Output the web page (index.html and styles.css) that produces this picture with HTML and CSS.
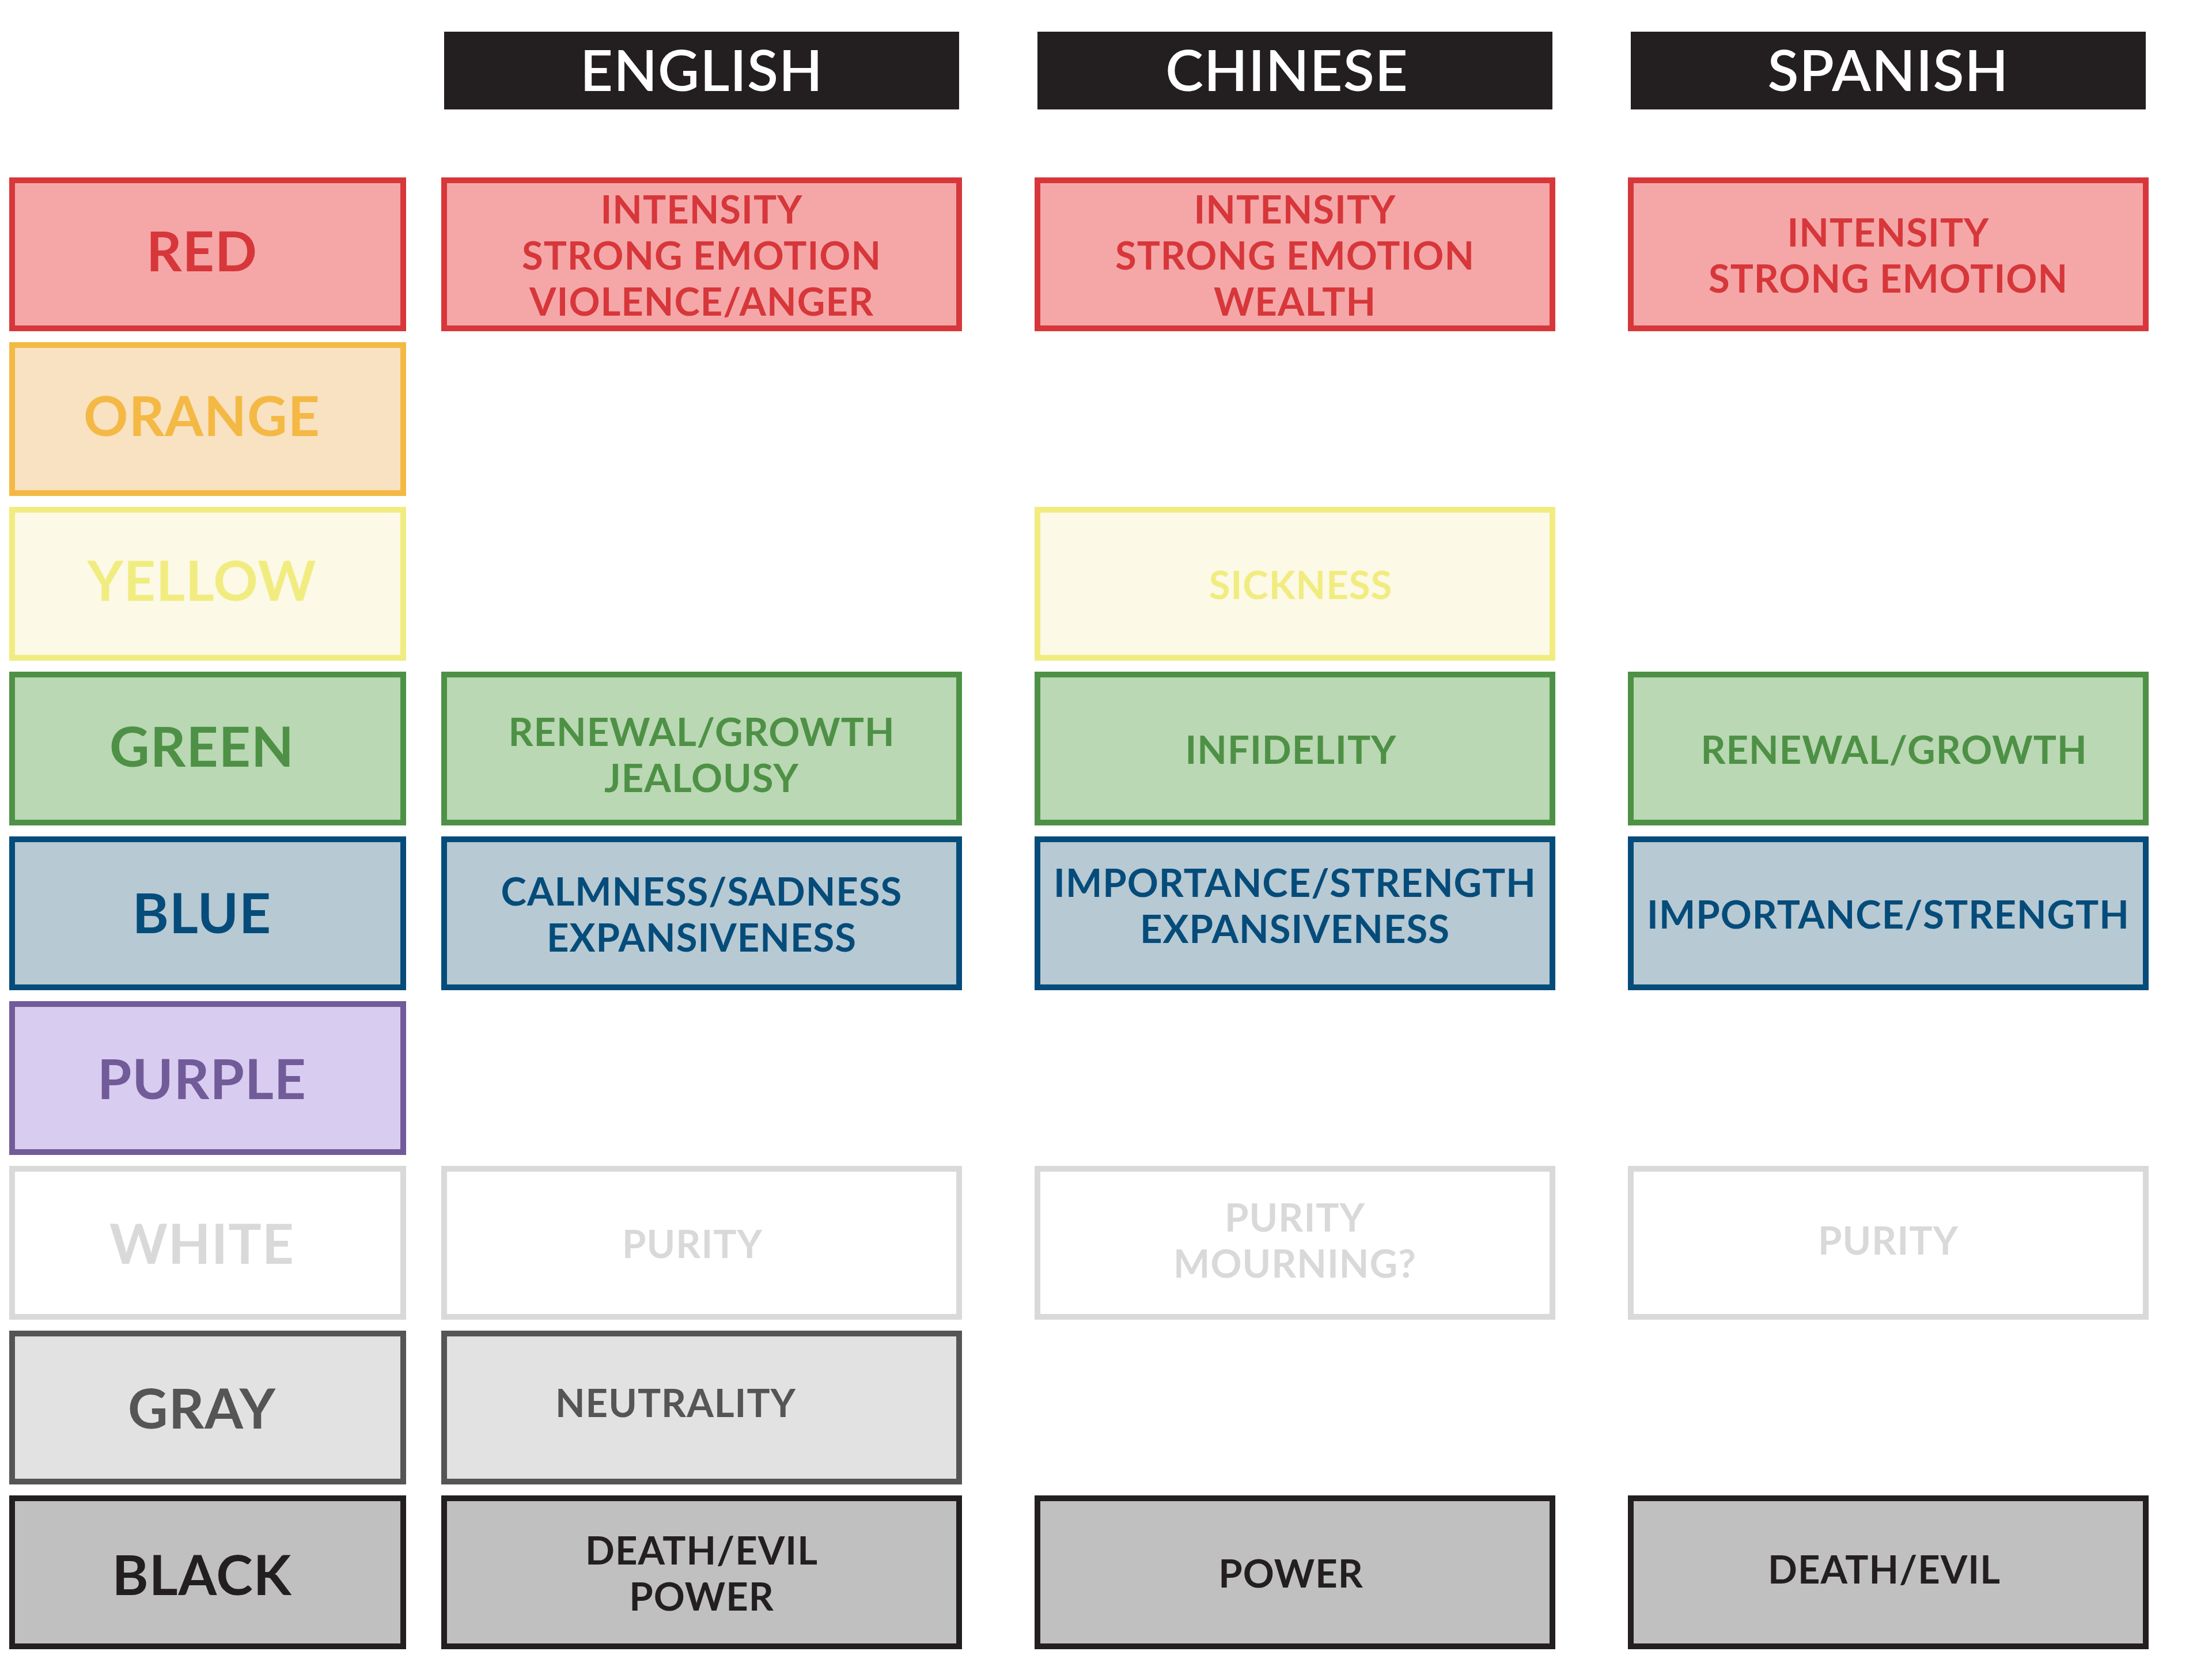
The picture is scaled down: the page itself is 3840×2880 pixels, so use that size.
FILE: index.html
```html
<!DOCTYPE html>
<html lang="en">
<head>
<meta charset="utf-8">
<title>Color meanings by language</title>
<link rel="stylesheet" href="styles.css">
</head>
<body>
<div class="chart">
  <div class="row head-row">
    <div class="label-spacer"></div>
    <div class="cell"><div class="head">ENGLISH</div></div>
    <div class="cell"><div class="head shift-l">CHINESE</div></div>
    <div class="cell"><div class="head">SPANISH</div></div>
  </div>

  <div class="row c-red">
    <div class="label box">RED</div>
    <div class="cell box">INTENSITY<br>STRONG EMOTION<br>VIOLENCE/ANGER</div>
    <div class="cell box">INTENSITY<br>STRONG EMOTION<br>WEALTH</div>
    <div class="cell box">INTENSITY<br>STRONG EMOTION</div>
  </div>

  <div class="row c-orange">
    <div class="label box">ORANGE</div>
    <div class="cell"></div>
    <div class="cell"></div>
    <div class="cell"></div>
  </div>

  <div class="row c-yellow">
    <div class="label box">YELLOW</div>
    <div class="cell"></div>
    <div class="cell box nudge-r">SICKNESS</div>
    <div class="cell"></div>
  </div>

  <div class="row c-green">
    <div class="label box">GREEN</div>
    <div class="cell box nudge-d">RENEWAL/GROWTH<br>JEALOUSY</div>
    <div class="cell box nudge-l">INFIDELITY</div>
    <div class="cell box nudge-r">RENEWAL/GROWTH</div>
  </div>

  <div class="row c-blue">
    <div class="label box">BLUE</div>
    <div class="cell box">CALMNESS/SADNESS<br>EXPANSIVENESS</div>
    <div class="cell box lift">IMPORTANCE/STRENGTH<br>EXPANSIVENESS</div>
    <div class="cell box">IMPORTANCE/STRENGTH</div>
  </div>

  <div class="row c-purple">
    <div class="label box">PURPLE</div>
    <div class="cell"></div>
    <div class="cell"></div>
    <div class="cell"></div>
  </div>

  <div class="row c-white">
    <div class="label box">WHITE</div>
    <div class="cell box shift-l2">PURITY</div>
    <div class="cell box nudge-u">PURITY<br>MOURNING?</div>
    <div class="cell box nudge-u">PURITY</div>
  </div>

  <div class="row c-gray">
    <div class="label box">GRAY</div>
    <div class="cell box shift-l3">NEUTRALITY</div>
    <div class="cell"></div>
    <div class="cell"></div>
  </div>

  <div class="row c-black">
    <div class="label box">BLACK</div>
    <div class="cell box">DEATH/EVIL<br>POWER</div>
    <div class="cell box nudge-l">POWER</div>
    <div class="cell box nudge-ul">DEATH/EVIL</div>
  </div>
</div>
</body>
</html>
```

FILE: styles.css
```css
html, body {
  margin: 0;
  padding: 0;
  background: #ffffff;
}

body {
  width: 3840px;
  height: 2880px;
  font-family: Lato, "Open Sans", "Liberation Sans", sans-serif;
  font-weight: 700;
}

.chart {
  display: flex;
  flex-direction: column;
  gap: 19px;
  padding: 55px 0 0 16px;
}

.row {
  display: flex;
  height: 267px;
}

.head-row {
  height: 135px;
  margin-bottom: 99px;
}

.label,
.label-spacer {
  width: 689px;
  flex: 0 0 689px;
  margin-right: 61px;
}

.cell {
  width: 904px;
  flex: 0 0 904px;
}

.cell + .cell {
  margin-left: 126px;
}

.head {
  box-sizing: border-box;
  height: 135px;
  margin: 0 5px;
  background: #231f20;
  color: #ffffff;
  font-size: 99px;
  font-weight: 600;
  letter-spacing: 1px;
  display: flex;
  align-items: center;
  justify-content: center;
  padding-bottom: 6px;
}

.box {
  box-sizing: border-box;
  border: 10px solid var(--line);
  background: var(--fill);
  color: var(--line);
  display: flex;
  align-items: center;
  justify-content: center;
  text-align: center;
}

.label.box {
  font-size: 96px;
  line-height: 1;
  letter-spacing: 1px;
  padding-right: 20px;
  padding-bottom: var(--lab-lift, 8px);
  padding-top: var(--lab-drop, 0px);
}

.cell.box {
  font-size: 67px;
  line-height: 80px;
  letter-spacing: 1px;
}

.shift-l { padding-right: 28px; }
.nudge-r { padding-left: 20px; }
.nudge-l { padding-right: 14px; }
.nudge-d { padding-top: 18px; }
.nudge-u { padding-bottom: 12px; }
.nudge-ul { padding-bottom: 14px; padding-right: 14px; }
.lift { padding-bottom: 30px; }
.shift-l2 { padding-right: 32px; }
.shift-l3 { padding-right: 90px; padding-bottom: 20px; }

.c-red    { --line: #d7373a; --fill: #f5a7a8; --lab-lift: 16px; }
.c-orange { --line: #f4b945; --fill: #f8e2c1; --lab-lift: 16px; }
.c-yellow { --line: #f1ec80; --fill: #fcf9e6; --lab-lift: 16px; }
.c-green  { --line: #4e9146; --fill: #b9d8b3; --lab-lift: 11px; }
.c-blue   { --line: #054c7a; --fill: #b7c9d3; --lab-lift: 6px; }
.c-purple { --line: #715b98; --fill: #d8ccf0; --lab-lift: 1px; }
.c-white  { --line: #d9d9d9; --fill: #ffffff; --lab-lift: 1px; }
.c-gray   { --line: #555555; --fill: #e2e2e2; --lab-lift: 1px; }
.c-black  { --line: #231f20; --fill: #c0c0c0; --lab-lift: 0px; --lab-drop: 4px; }
```
